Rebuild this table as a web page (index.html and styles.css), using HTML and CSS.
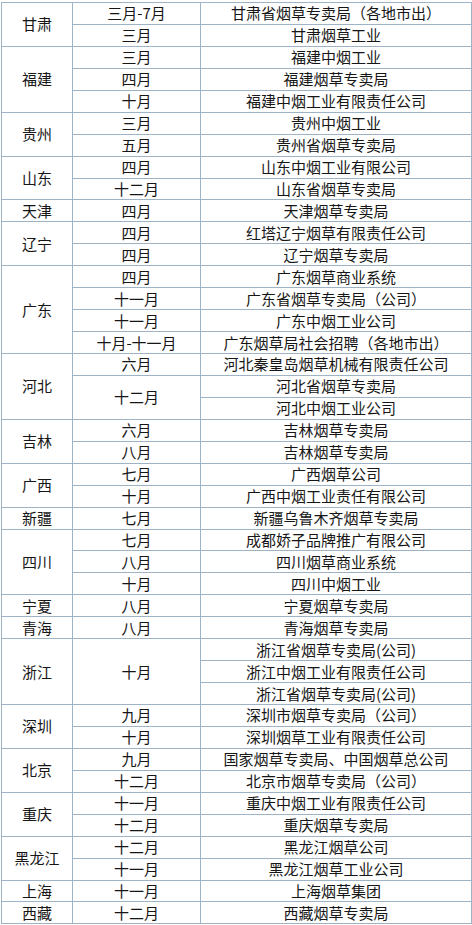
FILE: index.html
```html
<!DOCTYPE html>
<html lang="zh-CN">
<head>
<meta charset="utf-8">
<link rel="stylesheet" href="styles.css">
</head>
<body>
<table class="sched">
<colgroup><col class="c1"><col class="c2"><col class="c3"></colgroup>
<tbody>
<tr><td rowspan="2">甘肃</td><td>三月-7月</td><td>甘肃省烟草专卖局（各地市出）</td></tr>
<tr><td>三月</td><td>甘肃烟草工业</td></tr>
<tr><td rowspan="3">福建</td><td>三月</td><td>福建中烟工业</td></tr>
<tr><td>四月</td><td>福建烟草专卖局</td></tr>
<tr><td>十月</td><td>福建中烟工业有限责任公司</td></tr>
<tr><td rowspan="2">贵州</td><td>三月</td><td>贵州中烟工业</td></tr>
<tr><td>五月</td><td>贵州省烟草专卖局</td></tr>
<tr><td rowspan="2">山东</td><td>四月</td><td>山东中烟工业有限公司</td></tr>
<tr><td>十二月</td><td>山东省烟草专卖局</td></tr>
<tr><td>天津</td><td>四月</td><td>天津烟草专卖局</td></tr>
<tr><td rowspan="2">辽宁</td><td>四月</td><td>红塔辽宁烟草有限责任公司</td></tr>
<tr><td>四月</td><td>辽宁烟草专卖局</td></tr>
<tr><td rowspan="4">广东</td><td>四月</td><td>广东烟草商业系统</td></tr>
<tr><td>十一月</td><td>广东省烟草专卖局（公司）</td></tr>
<tr><td>十一月</td><td>广东中烟工业公司</td></tr>
<tr><td>十月-十一月</td><td>广东烟草局社会招聘（各地市出）</td></tr>
<tr><td rowspan="3">河北</td><td>六月</td><td>河北秦皇岛烟草机械有限责任公司</td></tr>
<tr><td rowspan="2">十二月</td><td>河北省烟草专卖局</td></tr>
<tr><td>河北中烟工业公司</td></tr>
<tr><td rowspan="2">吉林</td><td>六月</td><td>吉林烟草专卖局</td></tr>
<tr><td>八月</td><td>吉林烟草专卖局</td></tr>
<tr><td rowspan="2">广西</td><td>七月</td><td>广西烟草公司</td></tr>
<tr><td>十月</td><td>广西中烟工业责任有限公司</td></tr>
<tr><td>新疆</td><td>七月</td><td>新疆乌鲁木齐烟草专卖局</td></tr>
<tr><td rowspan="3">四川</td><td>七月</td><td>成都娇子品牌推广有限公司</td></tr>
<tr><td>八月</td><td>四川烟草商业系统</td></tr>
<tr><td>十月</td><td>四川中烟工业</td></tr>
<tr><td>宁夏</td><td>八月</td><td>宁夏烟草专卖局</td></tr>
<tr><td>青海</td><td>八月</td><td>青海烟草专卖局</td></tr>
<tr><td rowspan="3">浙江</td><td rowspan="3">十月</td><td>浙江省烟草专卖局(公司)</td></tr>
<tr><td>浙江中烟工业有限责任公司</td></tr>
<tr><td>浙江省烟草专卖局(公司)</td></tr>
<tr><td rowspan="2">深圳</td><td>九月</td><td>深圳市烟草专卖局（公司）</td></tr>
<tr><td>十月</td><td>深圳烟草工业有限责任公司</td></tr>
<tr><td rowspan="2">北京</td><td>九月</td><td>国家烟草专卖局、中国烟草总公司</td></tr>
<tr><td>十二月</td><td>北京市烟草专卖局（公司）</td></tr>
<tr><td rowspan="2">重庆</td><td>十一月</td><td>重庆中烟工业有限责任公司</td></tr>
<tr><td>十二月</td><td>重庆烟草专卖局</td></tr>
<tr><td rowspan="2">黑龙江</td><td>十二月</td><td>黑龙江烟草公司</td></tr>
<tr><td>十一月</td><td>黑龙江烟草工业公司</td></tr>
<tr><td>上海</td><td>十一月</td><td>上海烟草集团</td></tr>
<tr><td>西藏</td><td>十二月</td><td>西藏烟草专卖局</td></tr>
</tbody>
</table>
</body>
</html>
```
FILE: styles.css
```css
html, body {
  margin: 0;
  padding: 0;
  background: #ffffff;
}
body {
  padding: 2px 0 0 1px;
  font-family: "Noto Sans CJK SC", "Noto Sans", sans-serif;
  font-size: 15px;
  color: #161616;
}
.sched {
  border-collapse: collapse;
  table-layout: fixed;
  width: 470px;
  height: 922px;
}
.c1 { width: 71px; }
.c2 { width: 128px; }
.c3 { width: 271px; }
.sched td {
  border: 1px solid #9fb3c6;
  padding: 0;
  text-align: center;
  vertical-align: middle;
  line-height: 20px;
  white-space: nowrap;
  overflow: hidden;
  text-spacing-trim: space-all;
}
.sched tr {
  height: 21.95px;
}
```
